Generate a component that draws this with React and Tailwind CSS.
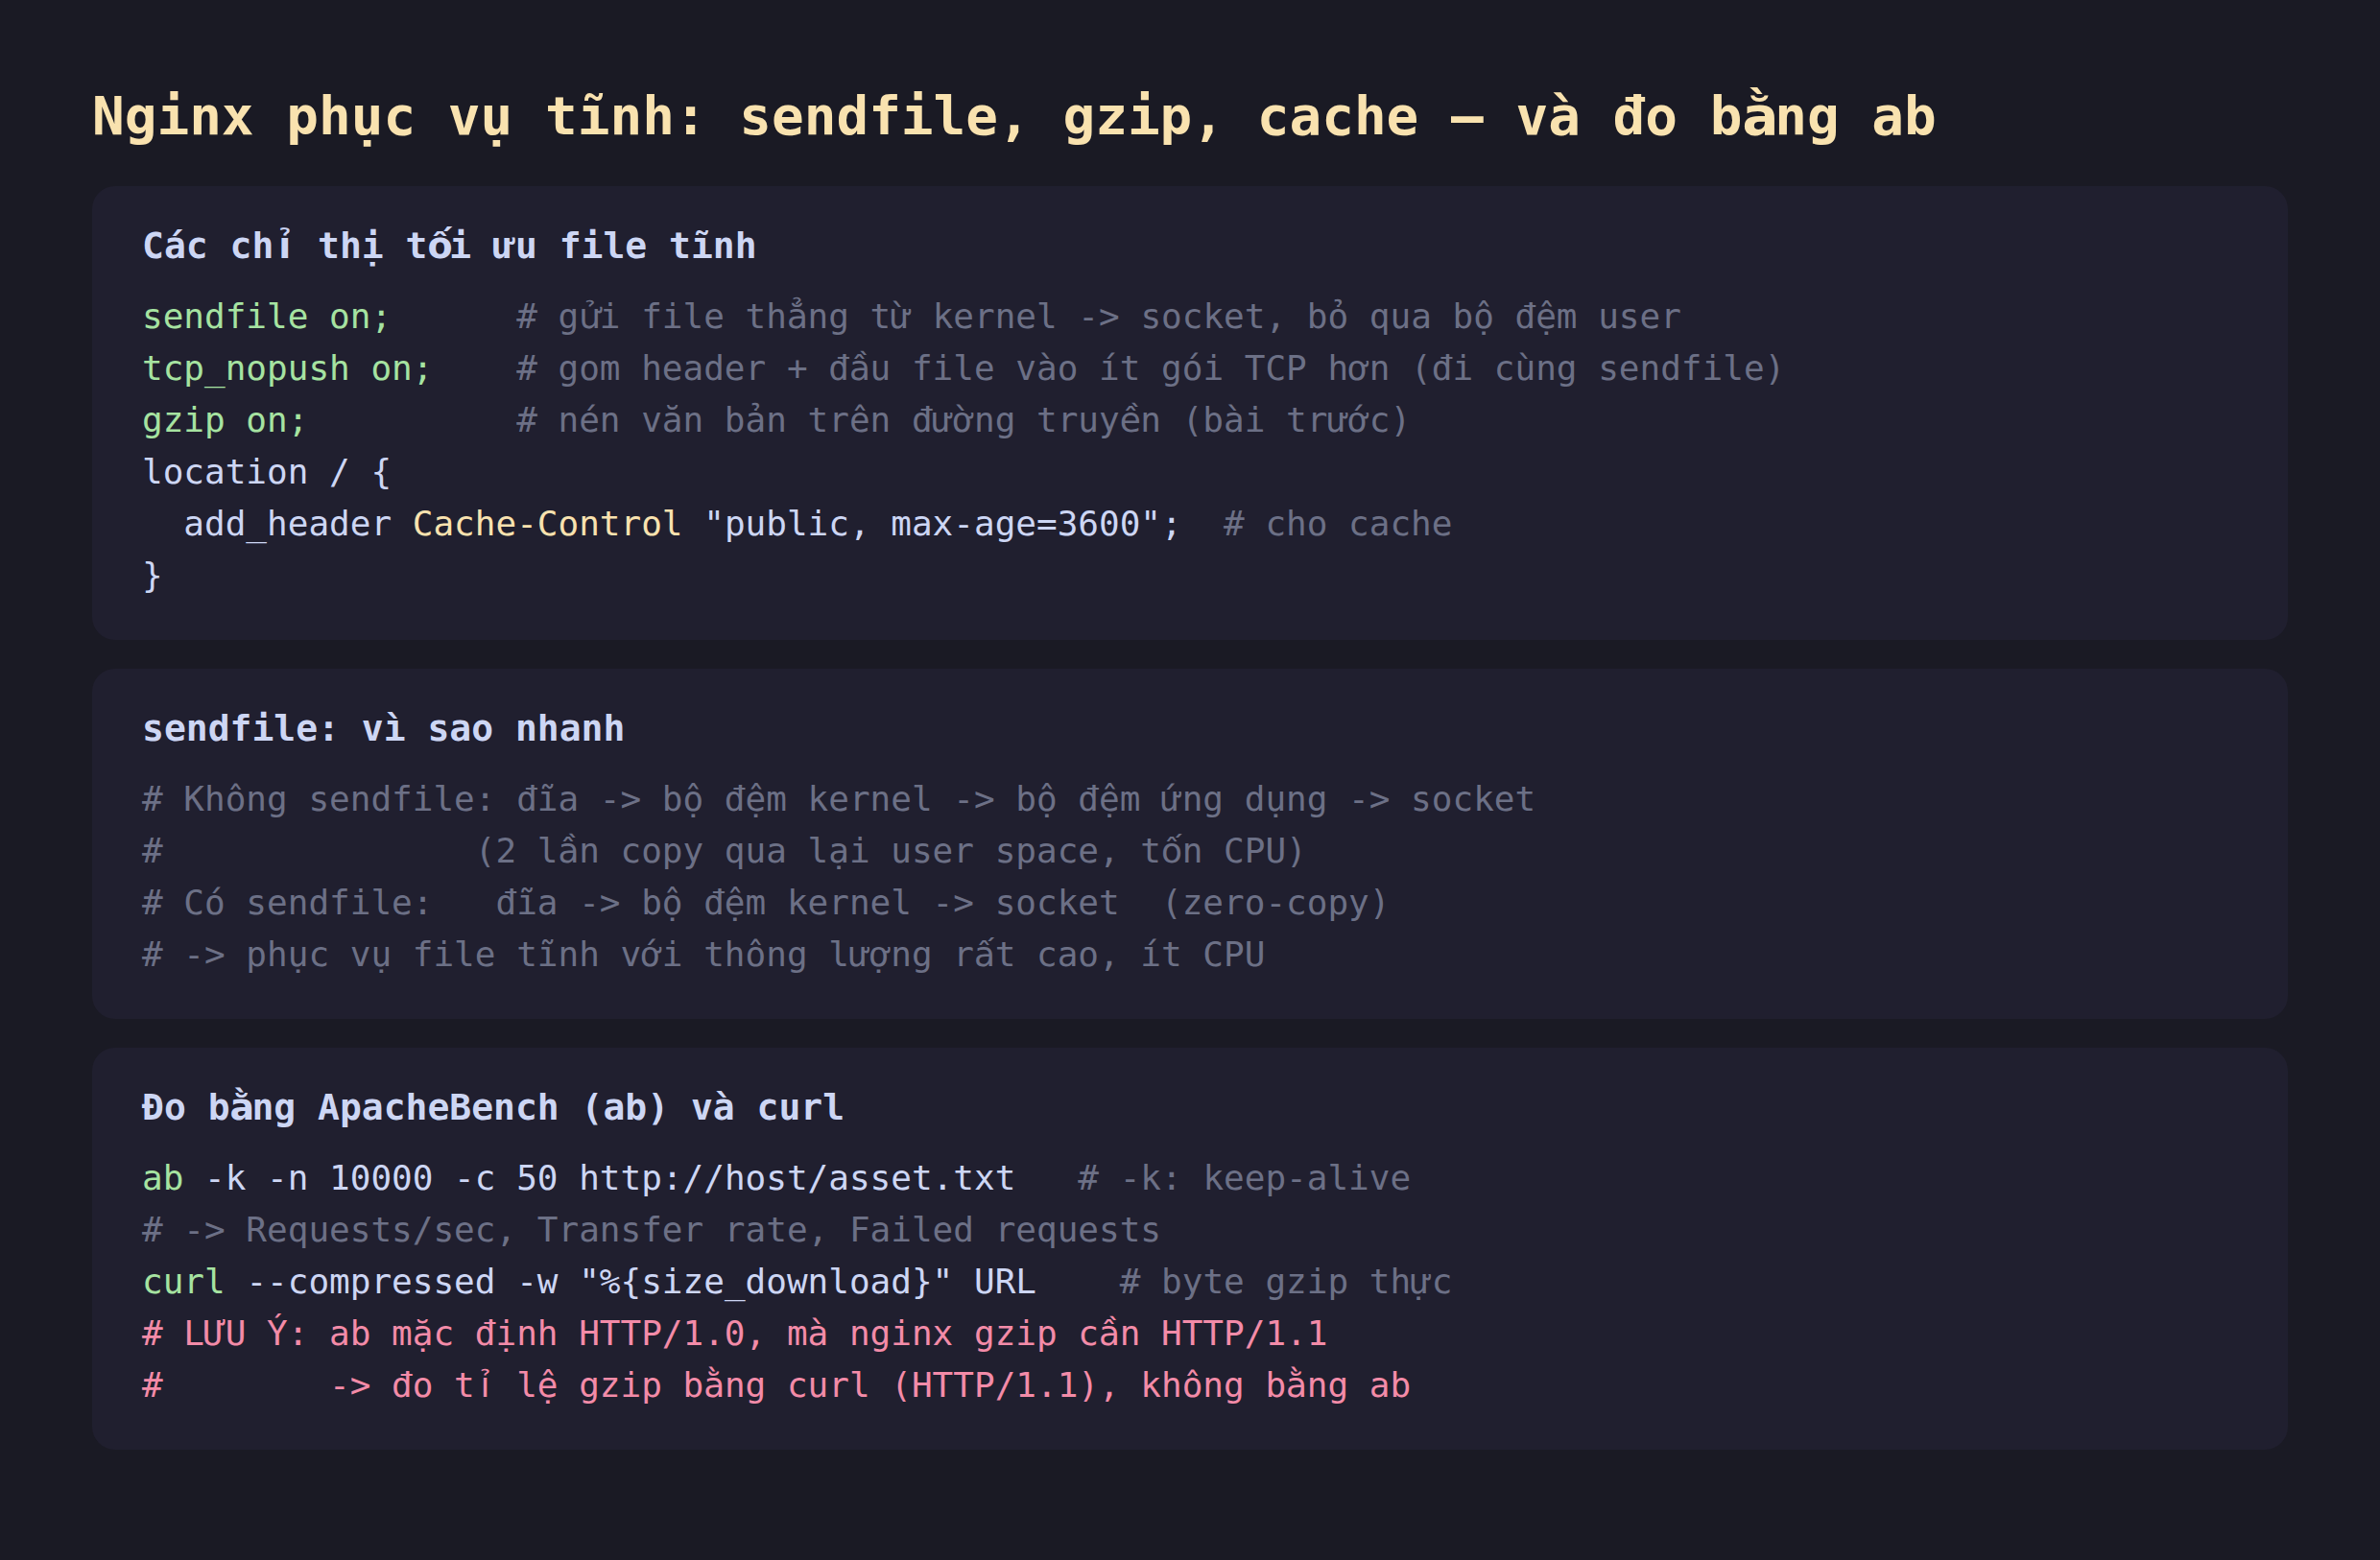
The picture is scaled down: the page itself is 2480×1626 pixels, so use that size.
import React from "react";

const C = {
  text: "text-[#cdd6f4]",
  green: "text-[#a6e3a1]",
  gray: "text-[#6c7086]",
  yellow: "text-[#f9e2af]",
  red: "text-[#f38ba8]",
};

const SPECIAL = new Set(
  "ấầẩẫắằẳẵếềểễốồổỗỉửởỷẤẦẨẪẮẰẲẴẾỀỂỄỐỒỔỖỈỬỞỶ".normalize("NFC").split("")
);

function V({ s }) {
  const chars = Array.from(s.normalize("NFC"));
  const out = [];
  let buf = "";
  chars.forEach((ch, i) => {
    if (SPECIAL.has(ch)) {
      if (buf) {
        out.push(buf);
        buf = "";
      }
      out.push(
        <span key={i} className="inline-block w-[0.6021em] text-center font-['DejaVu_Sans']">
          {ch}
        </span>
      );
    } else {
      buf += ch;
    }
  });
  if (buf) out.push(buf);
  return <>{out}</>;
}

function Line({ parts }) {
  return (
    <div className="whitespace-pre">
      {parts.map(([cls, t], i) => (
        <span key={i} className={cls}>
          <V s={t} />
        </span>
      ))}
    </div>
  );
}

function Card({ title, lines }) {
  return (
    <section className="bg-[#201f2f] rounded-[24px] px-[52px] pt-[36px] pb-[40px]">
      <h2 className="text-[38px] leading-[53px] font-bold text-[#cdd6f4] mb-[20px] whitespace-pre">
        <V s={title} />
      </h2>
      <div className="text-[36px] leading-[54px]">
        {lines.map((l, i) => (
          <Line key={i} parts={l} />
        ))}
      </div>
    </section>
  );
}

export default function App() {
  const card1 = [
    [[C.green, "sendfile on;"], [C.gray, "      # gửi file thẳng từ kernel -> socket, bỏ qua bộ đệm user"]],
    [[C.green, "tcp_nopush on;"], [C.gray, "    # gom header + đầu file vào ít gói TCP hơn (đi cùng sendfile)"]],
    [[C.green, "gzip on;"], [C.gray, "          # nén văn bản trên đường truyền (bài trước)"]],
    [[C.text, "location / {"]],
    [[C.text, "  add_header "], [C.yellow, "Cache-Control"], [C.text, ' "public, max-age=3600";'], [C.gray, "  # cho cache"]],
    [[C.text, "}"]],
  ];
  const card2 = [
    [[C.gray, "# Không sendfile: đĩa -> bộ đệm kernel -> bộ đệm ứng dụng -> socket"]],
    [[C.gray, "#               (2 lần copy qua lại user space, tốn CPU)"]],
    [[C.gray, "# Có sendfile:   đĩa -> bộ đệm kernel -> socket  (zero-copy)"]],
    [[C.gray, "# -> phục vụ file tĩnh với thông lượng rất cao, ít CPU"]],
  ];
  const card3 = [
    [[C.green, "ab"], [C.text, " -k -n 10000 -c 50 http://host/asset.txt"], [C.gray, "   # -k: keep-alive"]],
    [[C.gray, "# -> Requests/sec, Transfer rate, Failed requests"]],
    [[C.green, "curl"], [C.text, ' --compressed -w "%{size_download}" URL'], [C.gray, "    # byte gzip thực"]],
    [[C.red, "# LƯU Ý: ab mặc định HTTP/1.0, mà nginx gzip cần HTTP/1.1"]],
    [[C.red, "#        -> đo tỉ lệ gzip bằng curl (HTTP/1.1), không bằng ab"]],
  ];
  return (
    <div
      className="min-h-screen bg-[#1a1a24] px-[96px] pt-[88px] pb-[96px]"
      style={{ fontFamily: '"DejaVu Sans Mono", "Liberation Mono", monospace' }}
    >
      <h1 className="text-[56px] leading-[66px] font-bold text-[#f9e2af] mb-[40px] whitespace-pre">
        <V s="Nginx phục vụ tĩnh: sendfile, gzip, cache — và đo bằng ab" />
      </h1>
      <div className="flex flex-col gap-[30px]">
        <Card title="Các chỉ thị tối ưu file tĩnh" lines={card1} />
        <Card title="sendfile: vì sao nhanh" lines={card2} />
        <Card title="Đo bằng ApacheBench (ab) và curl" lines={card3} />
      </div>
    </div>
  );
}
